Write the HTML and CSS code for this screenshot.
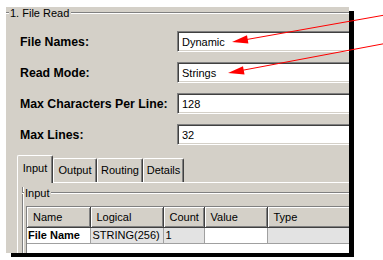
FILE: index.html
```html
<!DOCTYPE html>
<html>
<head>
<meta charset="utf-8">
<link rel="stylesheet" href="styles.css">
</head>
<body>
<div class="panel">
  <div class="caption"><span class="cap-lead"></span><span class="cap-text">1. File Read</span><span class="cap-line"></span></div>
  <div class="form">
    <label class="lbl">File Names:</label><div class="field">Dynamic</div>
    <label class="lbl">Read Mode:</label><div class="field">Strings</div>
    <label class="lbl">Max Characters Per Line:</label><div class="field">128</div>
    <label class="lbl">Max Lines:</label><div class="field">32</div>
  </div>
  <div class="tabs">
    <div class="tab active t-input">Input</div>
    <div class="tab t-output">Output</div>
    <div class="tab t-routing">Routing</div>
    <div class="tab t-details">Details</div>
  </div>
  <div class="tabpanel">
    <div class="group">
      <div class="caption inner"><span class="cap-lead"></span><span class="cap-text">Input</span><span class="cap-line"></span></div>
      <div class="grid">
        <table>
          <colgroup><col class="c1"><col class="c2"><col class="c3"><col class="c4"><col class="c5"></colgroup>
          <thead>
            <tr><th>Name</th><th>Logical</th><th>Count</th><th>Value</th><th>Type</th></tr>
          </thead>
          <tbody>
            <tr><td class="name">File Name</td><td>STRING(256)</td><td>1</td><td class="white"></td><td></td></tr>
          </tbody>
        </table>
      </div>
    </div>
  </div>
</div>
<svg class="arrows" width="383" height="260" viewBox="0 0 383 260">
  <line x1="385" y1="15" x2="240" y2="40.7" stroke="#ff0000" stroke-width="1"/>
  <polygon points="232,42 248.4,43.6 247,35.3" fill="#ff0000"/>
  <line x1="385" y1="43.5" x2="236" y2="71.5" stroke="#ff0000" stroke-width="1"/>
  <polygon points="228,73 244.5,74.5 243,66.2" fill="#ff0000"/>
</svg>
</body>
</html>
```
FILE: styles.css
```css
html, body { margin: 0; padding: 0; background: #fff; }
body { width: 383px; height: 260px; overflow: hidden; position: relative; font-family: "Liberation Sans", Arial, sans-serif; font-size: 11px; color: #000; }

.panel {
  margin: 7px 0 0 6px;
  width: 343px;
  height: 246px;
  background: #d4d0c8;
  box-shadow: 5px 4px 0 0 #000;
  overflow: hidden;
  display: flex;
  flex-direction: column;
}

.caption { display: flex; align-items: center; height: 12px; }
.cap-lead { width: 3px; height: 0; border-top: 1px solid #808080; border-bottom: 1px solid #fff; }
.cap-text { padding: 0 2px 0 1px; line-height: 12px; white-space: nowrap; }
.cap-line { flex: 1; height: 0; border-top: 1px solid #808080; border-bottom: 1px solid #fff; }

.form {
  display: grid;
  grid-template-columns: 157px 200px;
  grid-auto-rows: 21px;
  row-gap: 10px;
  margin: 12px 0 0 14px;
  align-items: center;
}
.lbl { font-weight: bold; font-size: 12.3px; white-space: nowrap; }
.field {
  box-sizing: border-box;
  height: 21px;
  background: #fff;
  border: 1px solid;
  border-color: #808080 #fff #fff #808080;
  box-shadow: inset 1px 1px 0 #404040, inset -1px -1px 0 #d4d0c8;
  padding: 3px 0 0 4px;
  line-height: 14px;
}

.tabs { display: flex; align-items: flex-end; margin: 10px 0 0 11px; height: 27px; }
.tab {
  box-sizing: border-box;
  height: 24px;
  padding-top: 5px;
  text-align: center;
  border-top: 1px solid #fff;
  border-left: 1px solid #fff;
  border-right: 1px solid #404040;
  box-shadow: inset -1px 0 0 #808080;
  border-radius: 2px 2px 0 0;
}
.tab.active { height: 27px; padding-top: 6px; position: relative; z-index: 1; margin-bottom: -1px; height: 28px; background: #d4d0c8; }
.t-input { width: 36px; }
.t-output { width: 44px; }
.t-routing { width: 46px; }
.t-details { width: 41px; }

.tabpanel {
  flex: 1;
  margin-left: 11px;
  border-top: 1px solid #fff;
  border-left: 1px solid #fff;
  padding: 4px 0 0 4px;
  display: flex;
  flex-direction: column;
}
.group {
  flex: 1;
  border-left: 1px solid #808080;
  box-shadow: inset 1px 0 0 #fff;
  display: flex;
  flex-direction: column;
}
.caption.inner { margin-left: -1px; }
.caption.inner .cap-lead { width: 2px; }
.grid {
  flex: 1;
  margin: 7px 0 0 3px;
  background: #fff;
  border-top: 1px solid #808080;
  border-left: 1px solid #808080;
}
table { border-collapse: collapse; table-layout: fixed; width: 324px; }
col.c1 { width: 63px; }
col.c2 { width: 73px; }
col.c3 { width: 41px; }
col.c4 { width: 63px; }
col.c5 { width: 84px; }
th {
  box-sizing: border-box;
  height: 20px;
  padding: 0 0 0 6px;
  text-align: left;
  font-weight: normal;
  background: #d4d0c8;
  box-shadow: inset 1px 1px 0 #fff, inset -1px -1px 0 #808080;
  border-right: 1px solid #404040;
  border-bottom: 1px solid #404040;
}
td {
  height: 15px;
  padding: 0 0 0 2px;
  background: #e3e3e3;
  border-right: 1px solid #a0a0a0;
  border-bottom: 1px solid #a0a0a0;
  white-space: nowrap;
  line-height: 15px;
}
td.name { background: #fff; font-weight: bold; padding-left: 1px; }
td.white { background: #fff; }

.arrows { position: absolute; left: 0; top: 0; pointer-events: none; }
```
